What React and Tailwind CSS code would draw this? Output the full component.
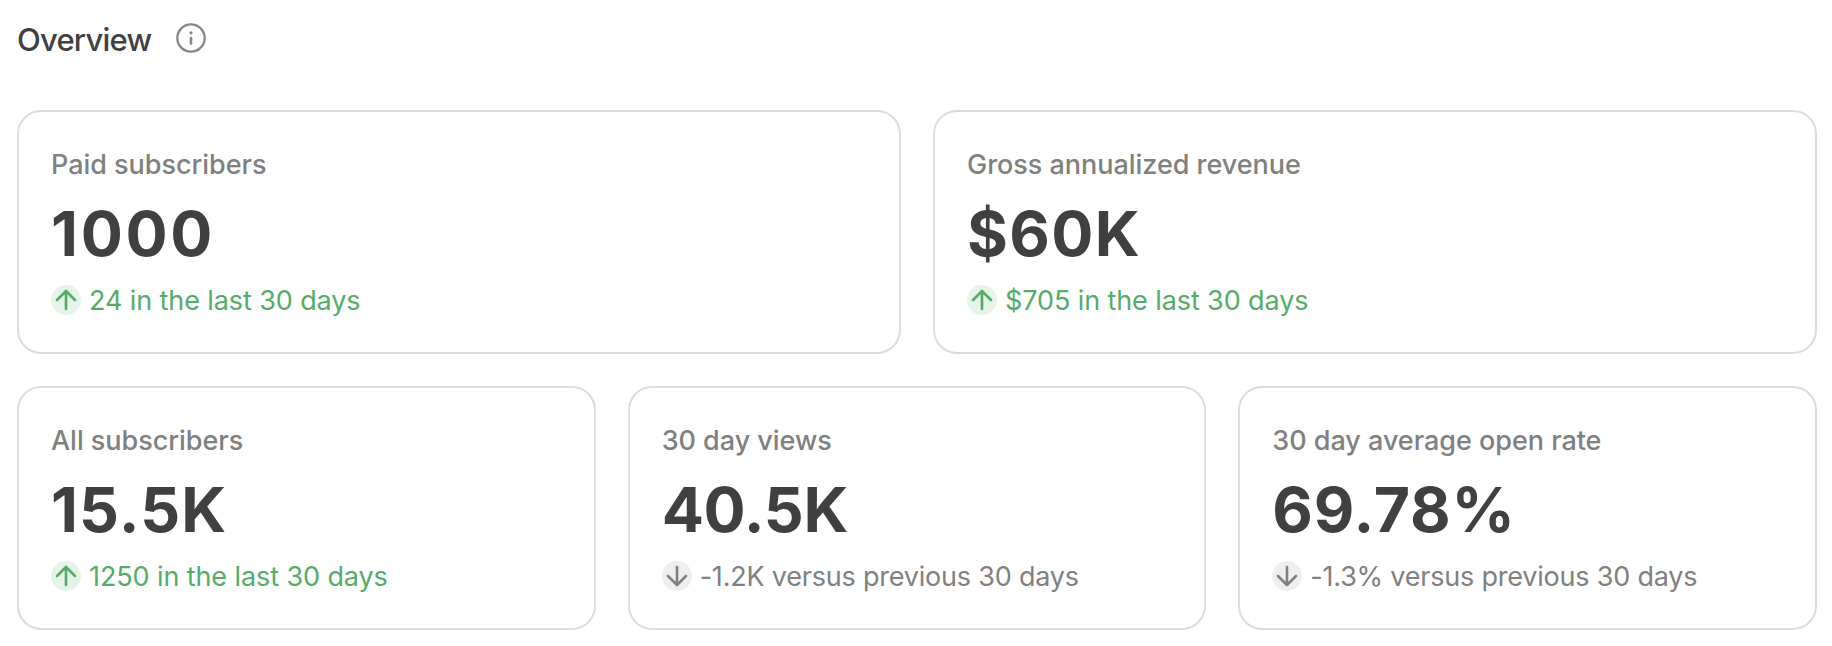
const revenueStats = [
    { label: "Paid subscribers", value: "1000", detail: "24 in the last 30 days", trend: "up", tracking: "tracking-[2.7px]" },
    { label: "Gross annualized revenue", value: "$60K", detail: "$705 in the last 30 days", trend: "up", tracking: "tracking-[1.4px]" },
]

const audienceStats = [
    { label: "All subscribers", value: "15.5K", detail: "1250 in the last 30 days", trend: "up", tracking: "tracking-[1.1px]" },
    { label: "30 day views", value: "40.5K", detail: "-1.2K versus previous 30 days", trend: "down", tracking: "tracking-[-0.3px]" },
    { label: "30 day average open rate", value: "69.78%", detail: "-1.3% versus previous 30 days", trend: "down", tracking: "tracking-[0.9px]" },
]

function InfoIcon() {
    return (
        <svg className="size-[30px]" viewBox="0 0 30 30" fill="none" stroke="currentColor" strokeWidth="2.3">
            <circle cx="15" cy="15" r="13.7" />
            <path d="M15 15v5.5" strokeWidth="2.6" strokeLinecap="round" />
            <circle cx="15" cy="9.8" r="1.6" fill="currentColor" stroke="none" />
        </svg>
    )
}

function TrendIcon({ trend }) {
    const isUp = trend === "up"

    return (
        <span className={`flex size-[30px] shrink-0 rounded-full ${isUp ? "bg-[#e5f3e8]" : "bg-[#eeeeee]"}`}>
            <svg
                className="size-[30px]"
                viewBox="0 0 30 30"
                fill="none"
                stroke="currentColor"
                strokeWidth="2.6"
                strokeLinecap="round"
                strokeLinejoin="round"
            >
                <path d={isUp ? "M15 24V6M6 15l9-9 9 9" : "M15 6v18M6 15l9 9 9-9"} />
            </svg>
        </span>
    )
}

function StatCard({ label, value, detail, trend, tracking }) {
    return (
        <div className="h-[244px] rounded-3xl border-2 border-[#dcdcdc] bg-white p-8">
            <p className="pt-px text-[27px] leading-10 font-medium tracking-[-0.03px] text-[#808080]">{label}</p>
            <p className={`mt-2 mb-[7px] text-[62.5px] leading-20 font-bold text-[#404040] ${tracking}`}>{value}</p>
            <div className={`flex h-10 items-center gap-2 ${trend === "up" ? "text-[#55ac68]" : "text-[#808080]"}`}>
                <TrendIcon trend={trend} />
                <span
                    className={`pt-0.5 text-[27px] leading-10 whitespace-nowrap ${trend === "up" ? "tracking-[-0.1px]" : "tracking-[-0.21px]"}`}
                >
                    {detail}
                </span>
            </div>
        </div>
    )
}

export default function App() {
    return (
        <main className="min-h-[646px] bg-white pt-[18px] pr-[15px] pl-[17px] font-['Inter',sans-serif]">
            <header className="flex h-10 items-center gap-[25px]">
                <h1 className="pt-[3px] text-[31px] leading-10 font-medium tracking-[-0.8px] text-[#404040]">Overview</h1>
                <span className="text-[#868686]">
                    <InfoIcon />
                </span>
            </header>
            <section className="mt-[52px] grid grid-cols-2 gap-8">
                {revenueStats.map((stat) => (
                    <StatCard key={stat.label} {...stat} />
                ))}
            </section>
            <section className="mt-8 grid grid-cols-3 gap-8">
                {audienceStats.map((stat) => (
                    <StatCard key={stat.label} {...stat} />
                ))}
            </section>
        </main>
    )
}
